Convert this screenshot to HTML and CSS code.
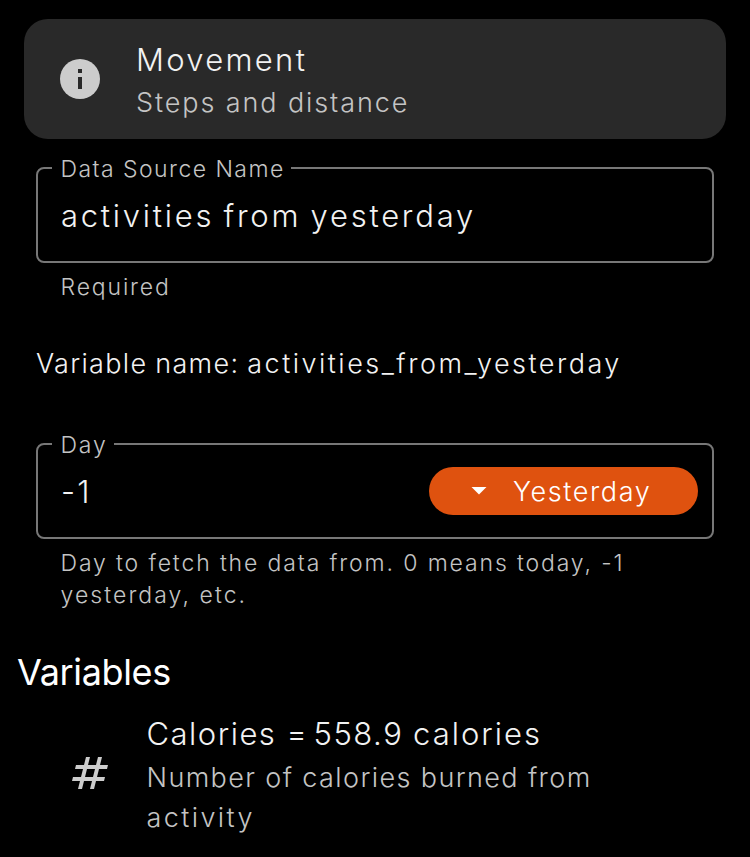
FILE: index.html
```html
<!DOCTYPE html>
<html lang="en">
<head>
<meta charset="utf-8">
<title>Movement</title>
<link rel="stylesheet" href="styles.css">
</head>
<body>
<main class="page">
  <section class="card">
    <svg class="info" viewBox="0 0 40 40"><circle cx="20" cy="20" r="20"/><path d="M18 10h4v4h-4zM18 18h4v12h-4z"/></svg>
    <div>
      <div class="title"><span class="t1">Movement</span></div>
      <div class="sub"><span class="t2">Steps and distance</span></div>
    </div>
  </section>
  <fieldset class="field source">
    <legend><span class="t3">Data Source Name</span></legend>
    <div class="value"><span class="t4">activities from yesterday</span></div>
  </fieldset>
  <p class="helper"><span class="t5">Required</span></p>
  <p class="varname"><span class="t6">Variable name: </span><span class="t6b">activities_from_yesterday</span></p>
  <fieldset class="field day">
    <legend><span class="t7">Day</span></legend>
    <div class="value"><span class="t8">-1</span>
      <button class="pill"><svg viewBox="0 0 16 8"><path d="M.5 0h15l-7.500 7.500z"/></svg><span class="t9">Yesterday</span></button>
    </div>
  </fieldset>
  <p class="helper long"><span class="t10">Day to fetch the data from. 0 means today, -1</span><br><span class="t11">yesterday, etc.</span></p>
  <h2><span class="t12">Variables</span></h2>
  <section class="row">
    <svg class="hash" viewBox="0 0 36 32"><path d="M14 0h4l-8 32h-4zM26 0h4l-8 32h-4zM4 8h32l-1 4H3zM1 20h32l-1 4H0z"/></svg>
    <div>
      <div class="title"><span class="t13">Calories =</span><span class="t13b"> 558.9</span><span class="t13c"> calories</span></div>
      <div class="sub"><span class="t14">Number of calories burned from</span><br><span class="t15">activity</span></div>
    </div>
  </section>
</main>
</body>
</html>
```
FILE: styles.css
```css
* { box-sizing: border-box; }
body { margin: 0; background: #000; color: #f2f2f2; font-family: Inter, sans-serif; font-weight: 300; }
.page { width: 750px; height: 857px; padding-top: 19px; overflow: hidden; white-space: nowrap; }
p, h2 { margin: 0; }
.card { display: flex; align-items: center; gap: 36px; width: 702px; height: 120px; margin-left: 24px; padding: 0 36px; border-radius: 24px; background: #292929; }
.card .title { padding-top: 3px; }
.card .sub { padding-top: 1px; }
.info { width: 40px; height: 40px; fill: #ccc; }
.info path { fill: #292929; }
.title { font-size: 31px; line-height: 44px; }
.sub { font-size: 27px; line-height: 40px; color: #c4c4c4; }
.field { width: 678px; height: 109px; margin: 15px 0 0 36px; padding: 0 14px 0 23px; border: 2px solid #777; border-radius: 8px; }
legend { height: 28px; margin-left: -9px; padding: 0 6.5px 0 8.5px; font-size: 23px; line-height: 30px; color: #c4c4c4; }
.value { display: flex; align-items: center; justify-content: space-between; height: 66px; font-size: 31px; }
.helper { height: 48px; padding: 8px 0 0 60.5px; font-size: 23px; line-height: 32px; color: #c4c4c4; }
.varname { padding: 33px 0 0 36px; font-size: 27px; line-height: 40px; }
.day { margin-top: 46px; }
.pill { display: flex; align-items: center; gap: 26px; width: 269px; height: 48px; padding: 0 42px; border: 0; border-radius: 24px; background: #df520f; color: #fff; font: 300 27px Inter, sans-serif; }
.pill svg { width: 16px; height: 8px; fill: #fff; flex: none; }
.long { height: 72px; }
h2 { margin-top: 37px; padding-left: 17px; color: #fff; font: 400 36px/48px Inter, sans-serif; }
.row { display: flex; align-items: center; gap: 38.5px; padding: 16px 0 0 72px; }
.row .sub { padding-top: 2px; }
.hash { width: 36px; height: 32px; margin-top: -4px; fill: #ccc; }
.t1 { letter-spacing: 2.3px; }
.t2 { letter-spacing: 1.9px; }
.t3 { letter-spacing: 1.45px; }
.t4 { letter-spacing: 2.75px; word-spacing: -2.2px; }
.t5 { letter-spacing: 1.85px; }
.t6 { letter-spacing: 1.3px; word-spacing: -1px; }
.t6b { letter-spacing: 2.5px; }
.t7 { letter-spacing: 1.8px; }
.t8 { letter-spacing: 2.3px; }
.t9 { letter-spacing: 1.6px; }
.t10 { letter-spacing: 1.87px; }
.t11 { letter-spacing: 2.07px; }
.t12 { letter-spacing: -.35px; }
.t13 { letter-spacing: 1.5px; }
.t13b { letter-spacing: 1.5px; word-spacing: -5px; }
.t13c { letter-spacing: 2px; word-spacing: -1px; }
.t14 { letter-spacing: 1.38px; }
.t15 { letter-spacing: 2.4px; }
```
